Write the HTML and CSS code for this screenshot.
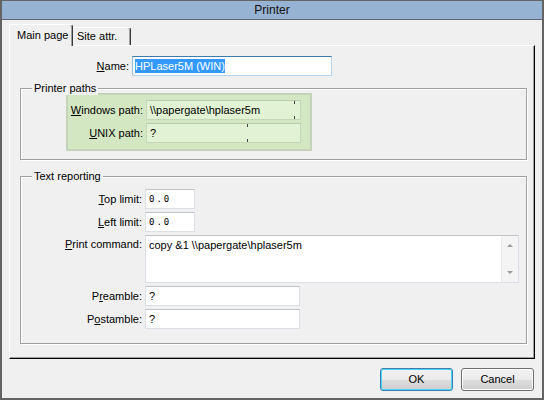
FILE: index.html
```html
<!DOCTYPE html>
<html>
<head>
<meta charset="utf-8">
<link rel="stylesheet" href="styles.css">
</head>
<body>
<div class="window">
  <div class="titlebar">Printer</div>
  <div class="main">
    <div class="tabs">
      <div class="tab active">Main page</div>
      <div class="tab">Site attr.</div>
    </div>
    <div class="panel">
      <div class="name-row">
        <div class="name-label"><u>N</u>ame:</div>
        <div class="field focused"><span class="hl">HPLaser5M (WIN)</span></div>
      </div>
      <div class="group paths">
        <span class="legend">Printer paths</span>
        <div class="green">
          <div class="lbl"><u>W</u>indows path:</div>
          <div class="field gfield">\\papergate\hplaser5m<span class="tick t1"></span><span class="tick b1"></span></div>
          <div class="lbl"><u>U</u>NIX path:</div>
          <div class="field gfield">?<span class="tick t2"></span><span class="tick b2"></span></div>
        </div>
      </div>
      <div class="group text">
        <span class="legend">Text reporting</span>
        <div class="lbl"><u>T</u>op limit:</div>
        <div class="field num">0.0</div>
        <div class="lbl"><u>L</u>eft limit:</div>
        <div class="field num">0.0</div>
        <div class="lbl top"><u>P</u>rint command:</div>
        <div class="field area">
          <div class="area-text">copy &amp;1 \\papergate\hplaser5m</div>
          <div class="scrollbar"><span class="arr up"></span><span class="arr down"></span></div>
        </div>
        <div class="lbl">P<u>r</u>eamble:</div>
        <div class="field wide">?</div>
        <div class="lbl">P<u>o</u>stamble:</div>
        <div class="field wide">?</div>
      </div>
    </div>
    <div class="buttons">
      <div class="btn default">OK</div>
      <div class="btn">Cancel</div>
    </div>
  </div>
</div>
</body>
</html>
```
FILE: styles.css
```css
* { box-sizing: border-box; }
html, body { margin: 0; padding: 0; }
body {
  width: 544px;
  height: 400px;
  overflow: hidden;
  font-family: "Liberation Sans", Arial, sans-serif;
  font-size: 11px;
  color: #000;
  background: #f0f0f0;
}
u { text-decoration: underline; text-underline-offset: 1px; }
.window {
  width: 544px;
  height: 400px;
  border: 2px solid #646464;
  border-top-width: 1px;
  display: flex;
  flex-direction: column;
  background: #f0f0f0;
}
.titlebar {
  height: 19px;
  background: #97b3d3;
  border-bottom: 1px solid #5e6671;
  text-align: center;
  font-size: 12px;
  line-height: 18px;
  color: #111;
}
.main {
  flex: 1;
  padding: 4px 7px 0 7px;
  display: flex;
  flex-direction: column;
}
.tabs {
  display: flex;
  align-items: flex-end;
  height: 21px;
  position: relative;
  z-index: 1;
}
.tab {
  height: 18px;
  width: 58px;
  padding-left: 4px;
  line-height: 17px;
  background: #f0f0f0;
  border-top: 1px solid #fff;
  border-right: 1px solid #3a3a3a;
  border-top-right-radius: 3px;
  box-shadow: inset -1px 0 0 #a0a0a0;
}
.tab.active {
  height: 22px;
  width: 64px;
  margin-bottom: -1px;
  padding-left: 7px;
  line-height: 20px;
  border-left: 1px solid #fff;
  border-top-left-radius: 2px;
}
.panel {
  height: 314px;
  border-left: 1px solid #fff;
  border-top: 1px solid #fff;
  border-right: 1px solid #000;
  border-bottom: 1px solid #000;
  box-shadow: inset -1px -1px 0 #a0a0a0;
  padding-top: 10px;
}
.name-row {
  display: flex;
  height: 20px;
}
.name-label {
  width: 119px;
  margin-right: 3px;
  text-align: right;
  line-height: 20px;
}
.field {
  position: relative;
  height: 20px;
  line-height: 18px;
  padding: 0 3px;
  background: #fff;
  border: 1px solid #dcdfe5;
  border-top-color: #c0c3c8;
  white-space: nowrap;
}
.name-row .field { width: 200px; padding-left: 2px; }
.field.focused {
  border-color: #b5d3ea;
  border-top-color: #3d7bad;
  border-left-color: #8fbde0;
}
.hl {
  background: #3399ff;
  color: #fff;
  padding: 1px 0;
}
.group {
  position: relative;
  margin: 12px 7px 0 10px;
  border: 1px solid #a0a0a0;
  box-shadow: 1px 1px 0 #fff, inset 1px 1px 0 #fff;
}
.legend {
  position: absolute;
  top: -7px;
  left: 11px;
  padding: 0 2px;
  line-height: 13px;
  background: #f0f0f0;
}
.paths {
  height: 72px;
  padding: 4px 0 0 45px;
}
.green {
  width: 246px;
  height: 58px;
  border: 2px solid #c6d3bb;
  background: #d4e7c3;
  padding-top: 5px;
  display: grid;
  grid-template-columns: 75px 155px;
  grid-auto-rows: 20px;
  column-gap: 3px;
  row-gap: 3px;
}
.lbl {
  text-align: right;
  line-height: 20px;
  white-space: nowrap;
}
.lbl.top { line-height: 18px; }
.gfield {
  background: #e1f3d4;
  border-color: #c3d8b5;
  border-top-color: #b9cdaa;
}
.tick {
  position: absolute;
  width: 1px;
  height: 3px;
  background: #444;
}
.t1 { left: 147px; top: 0; }
.b1 { left: 147px; bottom: 0; }
.t2 { left: 100px; top: 0; }
.b2 { left: 100px; bottom: 0; }
.text {
  height: 168px;
  margin-top: 16px;
  padding-top: 12px;
  display: grid;
  grid-template-columns: 121px 374px;
  grid-template-rows: 20px 20px 48px 20px 20px;
  column-gap: 3px;
  row-gap: 3px;
  align-items: start;
}
.num {
  width: 50px;
  font-family: "DejaVu Sans Mono", monospace;
  font-size: 9px;
  letter-spacing: 2px;
  padding-left: 3px;
}
.wide { width: 155px; }
.area {
  height: 48px;
  display: flex;
  padding: 0 0 0 3px;
}
.area-text { flex: 1; line-height: 16px; padding-top: 1px; }
.scrollbar {
  position: relative;
  width: 17px;
  height: 46px;
  background: #f4f4f4;
  border-left: 1px solid #ececec;
}
.arr {
  position: absolute;
  left: 5px;
  width: 0;
  height: 0;
  border-left: 3px solid transparent;
  border-right: 3px solid transparent;
}
.arr.up { top: 8px; border-bottom: 3px solid #9a9a9a; }
.arr.down { bottom: 8px; border-top: 3px solid #9a9a9a; }
.buttons {
  display: flex;
  justify-content: flex-end;
  gap: 8px;
  margin-top: 9px;
  padding-right: 1px;
}
.btn {
  width: 73px;
  height: 23px;
  border: 1px solid #707070;
  border-radius: 3px;
  background: linear-gradient(#f2f2f2 0%, #ebebeb 50%, #dddddd 51%, #cfcfcf 100%);
  box-shadow: inset 0 0 0 1px #fcfcfc;
  text-align: center;
  line-height: 21px;
}
.btn.default {
  border-color: #3c7fb1;
  box-shadow: inset 0 0 0 1px #48d4f7;
}
```
